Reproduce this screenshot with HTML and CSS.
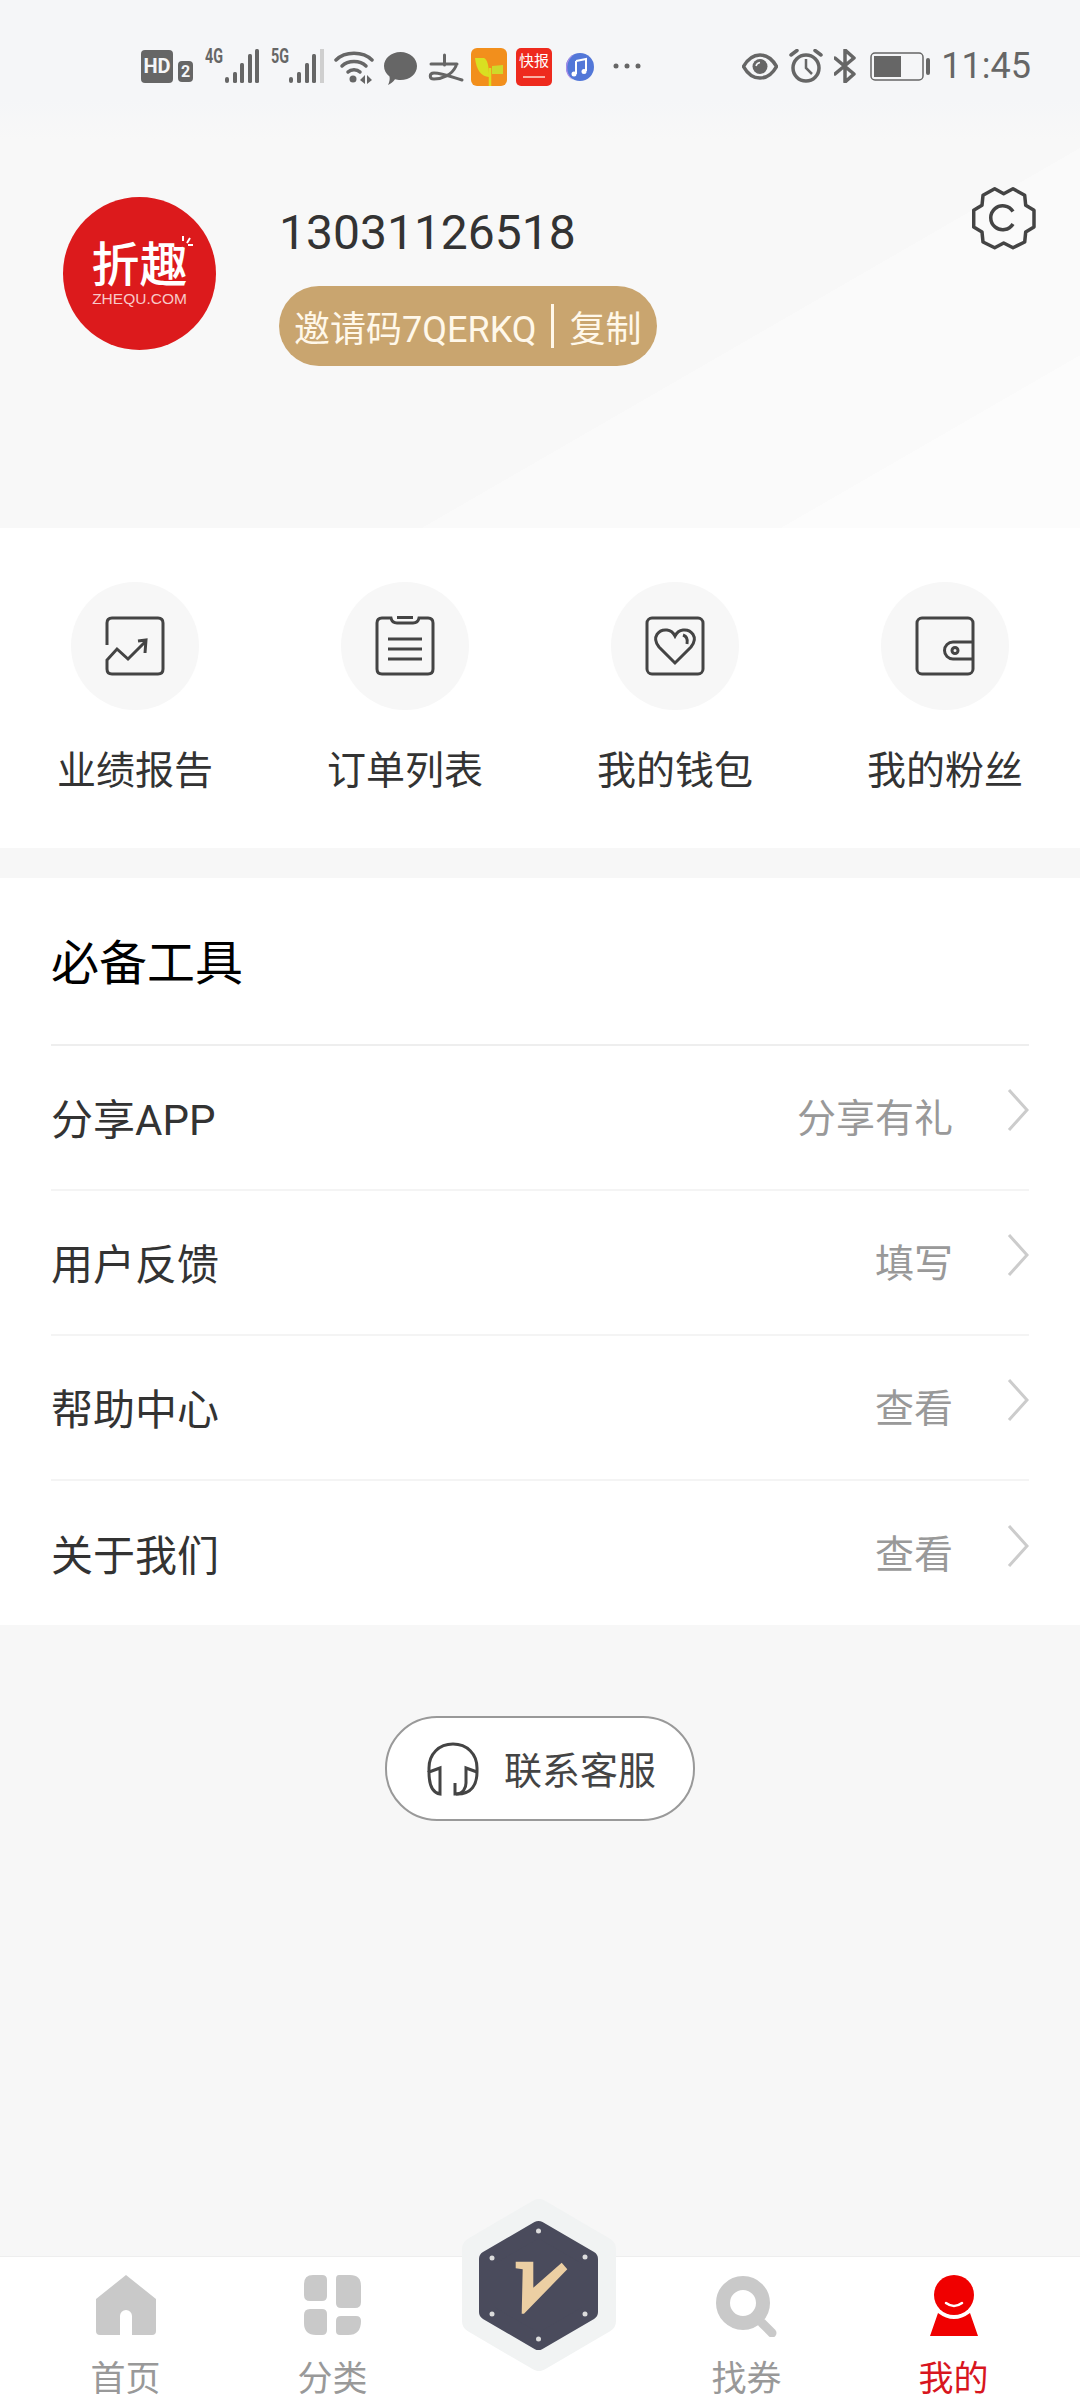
FILE: index.html
```html
<!DOCTYPE html>
<html lang="zh-CN">
<head>
    <meta charset="UTF-8">
    <meta name="viewport" content="width=device-width, initial-scale=1.0">
    <title>我的</title>
    <link rel="stylesheet" href="styles.css">
</head>
<body>
<div class="page">

    <header class="top">
        <div class="status">
            <span class="st hd">HD</span>
            <span class="st hd-two">2</span>
            <svg class="st sig-a" width="56" height="40" viewBox="0 -4 56 40">
                <text x="0" y="15" class="net" textLength="18" lengthAdjust="spacingAndGlyphs">4G</text>
                <rect x="20" y="29" width="4" height="6" rx="2" class="fill"/>
                <rect x="28" y="24" width="4" height="11" rx="1.5" class="fill"/>
                <rect x="35" y="15" width="4" height="20" rx="1.5" class="fill"/>
                <rect x="43" y="6" width="4" height="29" rx="1.5" class="fill"/>
                <rect x="50" y="1" width="4" height="34" rx="1.5" class="fill"/>
            </svg>
            <svg class="st sig-b" width="56" height="40" viewBox="0 -4 56 40">
                <text x="0" y="15" class="net" textLength="18" lengthAdjust="spacingAndGlyphs">5G</text>
                <rect x="18" y="29" width="4" height="6" rx="2" class="fill"/>
                <rect x="26" y="24" width="4" height="11" rx="1.5" class="fill"/>
                <rect x="34" y="15" width="4" height="20" rx="1.5" class="fill"/>
                <rect x="41" y="6" width="4" height="29" rx="1.5" class="fill"/>
                <rect x="49" y="1" width="4" height="34" fill="#cfcfcf"/>
            </svg>
            <svg class="st wifi" width="40" height="36" viewBox="0 0 40 36">
                <path d="M2 11C11 2 29 2 38 11" class="line"/>
                <path d="M8 17C14 11 26 11 32 17" class="line"/>
                <path d="M14 23C17 20 23 20 26 23" class="line"/>
                <circle cx="19" cy="30" r="3.5" class="fill"/>
                <path d="M31 26V35L26 31ZM33 26V35L38 31Z" class="fill"/>
            </svg>
            <svg class="st msg" width="35" height="35" viewBox="0 0 35 35">
                <path d="M17.5 1C27 1 34 7.5 34 15C34 23 27 29 17.5 29C15.5 29 13.5 28.7 12 28.2C10 31 7.5 33 5 34C6.5 31 7 28 6.5 25.5C3 22.8 1 19 1 15C1 7.5 8 1 17.5 1Z" class="fill"/>
            </svg>
            <svg class="st zhi" width="36" height="30" viewBox="0 0 36 30">
                <path d="M16.5 2V12M3 11H29M28 13C24 22 14 26 6 26C1 26 1 20 6 20C14 20 24 24 34 27" class="line-ali"/>
            </svg>
            <svg class="st sprout" width="36" height="38" viewBox="0 0 36 38">
                <rect width="36" height="38" rx="6" fill="#f28f1c"/>
                <path d="M4 10H13Q18 12 18 29Q6 28 4 10Z" fill="#d9e021"/>
                <path d="M21 18L32 17V26H21Z" fill="#cfd92a"/>
                <path d="M19 20V38" stroke="#d9e021" stroke-width="2.5"/>
            </svg>
            <div class="st kuai">
                <span>快报</span>
                <i></i>
            </div>
            <svg class="st music" width="30" height="30" viewBox="0 0 30 30">
                <circle cx="15" cy="15" r="14" fill="#5277d8"/>
                <path d="M1 15A14 14 0 0 1 10 2A16 16 0 0 0 8 28A14 14 0 0 1 1 15Z" fill="#a98be8"/>
                <path d="M11 9L21 7V19M11 9V22" stroke="#fff" stroke-width="2" fill="none"/>
                <circle cx="9" cy="22" r="2.5" fill="#fff"/>
                <circle cx="19" cy="19.5" r="2.5" fill="#fff"/>
            </svg>
            <svg class="st dots" width="28" height="8" viewBox="0 0 28 8">
                <circle cx="3" cy="4" r="2.5" class="fill"/>
                <circle cx="14" cy="4" r="2.5" class="fill"/>
                <circle cx="25" cy="4" r="2.5" class="fill"/>
            </svg>
            <div class="status-right">
                <svg class="st eye" width="36" height="27" viewBox="0 0 36 27">
                    <path d="M1.5 13.5C6 5.5 12 2 18 2C24 2 30 5.5 34.5 13.5C30 21.5 24 25 18 25C12 25 6 21.5 1.5 13.5Z" class="line"/>
                    <circle cx="18" cy="13.5" r="7.5" class="fill"/>
                    <path d="M14 13C14.5 11 16 9.8 18 9.5" stroke="#f5f6f8" stroke-width="1.5" fill="none"/>
                </svg>
                <svg class="st alarm" width="34" height="34" viewBox="0 0 34 34">
                    <circle cx="17" cy="19" r="13" class="line"/>
                    <path d="M17 10V19L23 25" class="line-thin"/>
                    <path d="M2 6L8 1.5M32 6L26 1.5" class="line"/>
                </svg>
                <svg class="st blue" width="22" height="34" viewBox="0 0 22 34">
                    <path d="M1 9L20 25L11 33V1L20 9L1 25" class="line"/>
                </svg>
                <svg class="st batt" width="61" height="29" viewBox="0 0 61 29">
                    <rect x="1" y="1" width="52" height="27" rx="4" fill="none" stroke="#666" stroke-width="1.5"/>
                    <rect x="4" y="4" width="27" height="21" class="fill"/>
                    <rect x="56" y="6" width="4" height="17" rx="2" class="fill"/>
                </svg>
                <span class="time">11:45</span>
            </div>
        </div>

        <div class="profile">
            <div class="avatar">
                <span class="logo-cn">折趣</span>
                <span class="logo-en">ZHEQU.COM</span>
                <svg class="logo-spark" width="16" height="16" viewBox="0 0 16 16">
                    <path d="M5 1V6M12 3L9 8M15 10H10" stroke="#fff" stroke-width="2"/>
                </svg>
            </div>
            <div class="who">
                <div class="phone">13031126518</div>
                <div class="invite">
                    <span>邀请码7QERKQ</span>
                    <i class="invite-bar"></i>
                    <span>复制</span>
                </div>
            </div>
            <svg class="gear" width="64" height="64" viewBox="0 0 64 64">
                <path class="gear-line" d="M22.7 2.7L31.7 7.7L41 2.7L52.7 9.300L53.7 19.300L62 24.300V41L53.7 46L52.7 56L41 61.700L31.7 57L22.7 61.700L11 56L10 46L1.7 41V24.300L10 19.300L11 9.300Z"/>
                <path class="gear-line" d="M41 25.5A12 12 0 1 0 41 38"/>
            </svg>
        </div>
    </header>

    <section class="quick">
        <div class="quick-item">
            <div class="quick-circle">
                <svg class="quick-icon" width="60" height="60" viewBox="0 0 60 60">
                    <path d="M2 29V7Q2 2 7 2H53Q58 2 58 7V53Q58 58 53 58H7Q2 58 2 53V44L12 33L23 43L41 25M33 25L41 24L40 37"/>
                </svg>
            </div>
            <span>业绩报告</span>
        </div>
        <div class="quick-item">
            <div class="quick-circle">
                <svg class="quick-icon" width="60" height="60" viewBox="0 0 60 60">
                    <path d="M16 2H7Q2 2 2 7V53Q2 58 7 58H53Q58 58 58 53V7Q58 2 53 2H44Q43 7 38 7H22Q17 7 16 2ZM22 1.5H38M13 23H47M13 33H47M13 43H47"/>
                </svg>
            </div>
            <span>订单列表</span>
        </div>
        <div class="quick-item">
            <div class="quick-circle">
                <svg class="quick-icon" width="60" height="60" viewBox="0 0 60 60">
                    <rect x="2" y="2" width="56" height="56" rx="5"/>
                    <path d="M30 47L14 31C6 21 14 13 22 14C26 14.5 28.5 17 30 20C31.5 17 34 14.5 38 14C46 13 54 21 46 31Z"/>
                    <path d="M38 19C41 20 43 23 42 28"/>
                </svg>
            </div>
            <span>我的钱包</span>
        </div>
        <div class="quick-item">
            <div class="quick-circle">
                <svg class="quick-icon" width="60" height="60" viewBox="0 0 60 60">
                    <rect x="2" y="2" width="56" height="56" rx="5"/>
                    <path d="M58 26H38A8.5 8.5 0 0 0 38 43H58"/>
                    <circle cx="40" cy="34.5" r="3"/>
                </svg>
            </div>
            <span>我的粉丝</span>
        </div>
    </section>

    <section class="tools">
        <h2 class="tools-title">必备工具</h2>
        <div class="tools-row">
            <span class="row-name">分享APP</span>
            <span class="row-hint">分享有礼</span>
            <svg class="chev" width="22" height="42" viewBox="0 0 22 42"><path d="M2 1L20 21L2 41"/></svg>
        </div>
        <div class="tools-row">
            <span class="row-name">用户反馈</span>
            <span class="row-hint">填写</span>
            <svg class="chev" width="22" height="42" viewBox="0 0 22 42"><path d="M2 1L20 21L2 41"/></svg>
        </div>
        <div class="tools-row">
            <span class="row-name">帮助中心</span>
            <span class="row-hint">查看</span>
            <svg class="chev" width="22" height="42" viewBox="0 0 22 42"><path d="M2 1L20 21L2 41"/></svg>
        </div>
        <div class="tools-row">
            <span class="row-name">关于我们</span>
            <span class="row-hint">查看</span>
            <svg class="chev" width="22" height="42" viewBox="0 0 22 42"><path d="M2 1L20 21L2 41"/></svg>
        </div>
    </section>

    <div class="service-wrap">
        <div class="service">
            <svg class="service-icon" width="54" height="54" viewBox="0 0 54 54">
                <path d="M3 30V26C3 12 13 2 27 2C41 2 51 12 51 26V30C51 42 46 52 31 52H29V41"/>
                <path d="M3 30L14 26V52C7 51 3 44 3 30Z"/>
                <path d="M51 30L40 26V41C40 46 37 52 30 52"/>
            </svg>
            <span>联系客服</span>
        </div>
    </div>

    <nav class="tabs">
        <div class="tab">
            <svg width="60" height="60" viewBox="0 0 60 60">
                <path d="M30 0L60 24V56Q60 60 56 60H36V41A6 6 0 0 0 24 41V60H4Q0 60 0 56V24Z" fill="#c9c9c9"/>
            </svg>
            <span>首页</span>
        </div>
        <div class="tab">
            <svg width="58" height="60" viewBox="0 0 58 60">
                <path d="M9 0H18Q23 0 23 5V21Q23 26 18 26H6Q0 26 0 20V9Q0 0 9 0Z" fill="#c9c9c9"/>
                <path d="M35 0H46Q57 0 57 11V27Q57 33 51 33H37Q32 33 32 28V4Q32 0 35 0Z" fill="#c9c9c9"/>
                <path d="M6 34H18Q23 34 23 39V55Q23 60 18 60H12Q0 60 0 48V40Q0 34 6 34Z" fill="#c9c9c9"/>
                <path d="M37 41H52Q57 41 57 46Q57 60 44 60H36Q32 60 32 56V46Q32 41 37 41Z" fill="#c9c9c9"/>
            </svg>
            <span>分类</span>
        </div>
        <div class="tab"></div>
        <div class="tab">
            <svg width="62" height="62" viewBox="0 0 62 62">
                <circle cx="27" cy="28" r="20" fill="none" stroke="#c9c9c9" stroke-width="14"/>
                <path d="M46 48L56 58" stroke="#c9c9c9" stroke-width="9" stroke-linecap="round"/>
            </svg>
            <span>找券</span>
        </div>
        <div class="tab tab-on">
            <svg width="48" height="62" viewBox="0 0 48 62">
                <circle cx="24" cy="20" r="20" fill="#f00000"/>
                <path d="M16 28Q24 34 32 28" stroke="#fff" stroke-width="2.5" fill="none" stroke-linecap="round"/>
                <path d="M8 38Q24 50 40 38L48 61H0Z" fill="#f00000"/>
            </svg>
            <span>我的</span>
        </div>
        <svg class="hex" width="156" height="172" viewBox="0 0 156 172">
            <path d="M77 12L142 50V122L77 160L12 122V50Z" fill="#f1f3f3" stroke="#f1f3f3" stroke-width="24" stroke-linejoin="round"/>
            <path d="M76.5 30L128 60V113L76.5 143L25 113V60Z" fill="#4a4b5c" stroke="#4a4b5c" stroke-width="16" stroke-linejoin="round"/>
            <circle cx="76.5" cy="32" r="2.5" fill="#dcdcdc"/>
            <circle cx="123" cy="58" r="2.5" fill="#dcdcdc"/>
            <circle cx="123" cy="115" r="2.5" fill="#dcdcdc"/>
            <circle cx="76.5" cy="140" r="2.5" fill="#dcdcdc"/>
            <circle cx="30" cy="115" r="2.5" fill="#dcdcdc"/>
            <circle cx="30" cy="59" r="2.5" fill="#dcdcdc"/>
            <path d="M53.7 62.7H71.3V88.7L99.7 63.7L105.3 70.3L62 114.7H59.7L60.7 70.3L53.7 69.3Z" fill="#eccfa3"/>
        </svg>
    </nav>

</div>
</body>
</html>
```

FILE: styles.css
```css
* {
    box-sizing: border-box;
}
body {
    margin: 0;
    font-family: Roboto, "Noto Sans CJK SC", sans-serif;
    color: #333;
}
.page {
    width: 1080px;
    height: 2400px;
    display: flex;
    flex-direction: column;
    background: #f7f7f7;
    overflow: hidden;
}

/* top area */
.top {
    height: 528px;
    background:
        linear-gradient(#f5f6f8 100px, rgba(245, 246, 248, 0) 140px),
        linear-gradient(150deg, #f8f8f8 67%, #fafafa 67%, #fafafa 85%, #fcfcfc 85%);
}
.status {
    height: 110px;
    padding: 48px 49px 0 141px;
    display: flex;
    align-items: flex-start;
}
.st {
    flex: none;
}
.fill {
    fill: #666;
}
.line {
    fill: none;
    stroke: #666;
    stroke-width: 3.5;
    stroke-linecap: round;
    stroke-linejoin: round;
}
.line-thin {
    fill: none;
    stroke: #666;
    stroke-width: 2.5;
}
.line-ali {
    fill: none;
    stroke: #666;
    stroke-width: 3;
    stroke-linecap: round;
}
.hd {
    width: 32px;
    height: 33px;
    margin-top: 2px;
    border-radius: 4px;
    background: #666;
    color: #f5f6f8;
    font-size: 20px;
    font-weight: 700;
    line-height: 33px;
    text-align: center;
}
.hd-two {
    width: 15px;
    height: 21px;
    margin: 13px 0 0 5px;
    border-radius: 4px;
    background: #666;
    color: #f5f6f8;
    font-size: 16px;
    font-weight: 700;
    line-height: 21px;
    text-align: center;
}
.net {
    font: 700 20px Roboto, sans-serif;
    fill: #666;
}
.sig-a {
    margin: -4px 0 0 12px;
}
.sig-b {
    margin: -4px 0 0 10px;
}
.wifi {
    margin-left: 7px;
    margin-top: 1px;
}
.msg {
    margin-left: 9px;
    margin-top: 3px;
}
.zhi {
    margin-left: 10px;
    margin-top: 5px;
}
.sprout {
    margin-left: 7px;
}
.kuai {
    width: 36px;
    height: 38px;
    margin-left: 9px;
    border-radius: 5px;
    background: #ee2a1e;
    color: #fff;
    display: flex;
    flex-direction: column;
    align-items: center;
}
.kuai span {
    font-size: 15px;
    line-height: 26px;
    white-space: nowrap;
}
.kuai i {
    width: 22px;
    height: 2px;
    margin-top: 2px;
    background: #f9b0a5;
}
.music {
    margin-left: 13px;
    margin-top: 4px;
}
.dots {
    margin-left: 18px;
    margin-top: 14px;
}
.status-right {
    margin-left: auto;
    margin-top: 1px;
    display: flex;
    align-items: center;
    height: 34px;
}
.eye {
    margin-right: 11px;
}
.alarm {
    margin-right: 11px;
}
.blue {
    margin-right: 14px;
}
.batt {
    margin-right: 10px;
}
.time {
    font-size: 36px;
    line-height: 34px;
    color: #666;
}

.profile {
    padding: 87px 44px 0 63px;
    display: flex;
    align-items: flex-start;
}
.avatar {
    position: relative;
    width: 153px;
    height: 153px;
    border-radius: 50%;
    background: #dc1a1c;
    color: #fff;
    display: flex;
    flex-direction: column;
    align-items: center;
    padding-top: 46px;
}
.logo-cn {
    font-size: 48px;
    line-height: 46px;
    font-weight: 500;
    white-space: nowrap;
}
.logo-en {
    font: 15.5px "Liberation Sans", sans-serif;
    line-height: 20px;
    color: #f8c9c9;
}
.logo-spark {
    position: absolute;
    right: 22px;
    top: 38px;
}
.who {
    margin-left: 63px;
    flex: 1;
}
.phone {
    margin-top: 6px;
    font-size: 48px;
    line-height: 60px;
}
.invite {
    width: 378px;
    height: 80px;
    margin-top: 23px;
    padding: 0 15px;
    border-radius: 40px;
    background: #c9a56f;
    color: #fff8ea;
    font-size: 36px;
    display: flex;
    align-items: center;
    white-space: nowrap;
}
.invite-bar {
    flex: none;
    width: 3px;
    height: 44px;
    margin: 0 15px;
    background: #fff8ea;
}
.gear {
    margin-top: -11px;
}
.gear-line {
    fill: none;
    stroke: #444;
    stroke-width: 3.5;
    stroke-linejoin: round;
}

/* quick links */
.quick {
    height: 320px;
    padding-top: 54px;
    background: #fff;
    display: grid;
    grid-template-columns: repeat(4, 270px);
}
.quick-item {
    display: flex;
    flex-direction: column;
    align-items: center;
    font-size: 39px;
    color: #333;
}
.quick-item span {
    margin-top: 33px;
    line-height: 56px;
}
.quick-circle {
    width: 128px;
    height: 128px;
    border-radius: 50%;
    background: #f7f7f7;
    display: flex;
    align-items: center;
    justify-content: center;
}
.quick-icon * {
    fill: none;
    stroke: #444;
    stroke-width: 3;
}

/* tool list */
.tools {
    margin-top: 30px;
    height: 747px;
    padding: 0 51px;
    background: #fff;
}
.tools-title {
    height: 168px;
    margin: 0;
    font-size: 48px;
    font-weight: 400;
    line-height: 172px;
    color: #000;
    border-bottom: 2px solid #eee;
}
.tools-row {
    height: 145px;
    display: flex;
    align-items: center;
    border-bottom: 2px solid #f4f4f4;
}
.tools-row:last-child {
    border-bottom: none;
}
.row-name {
    margin-bottom: 2px;
    font-size: 42px;
    color: #333;
}
.row-hint {
    margin-left: auto;
    margin-bottom: 6px;
    font-size: 39px;
    color: #999;
}
.chev {
    margin: -16px 0 0 54px;
}
.chev path {
    fill: none;
    stroke: #ccc;
    stroke-width: 3;
}

/* contact button */
.service-wrap {
    padding-top: 91px;
    display: flex;
    justify-content: center;
}
.service {
    width: 310px;
    height: 105px;
    border: 2px solid #999;
    border-radius: 52px;
    background: #fff;
    padding-left: 39px;
    display: flex;
    align-items: center;
    font-size: 38px;
    color: #444;
}
.service span {
    margin-left: 24px;
    margin-top: -2px;
    white-space: nowrap;
}
.service-icon * {
    fill: none;
    stroke: #444;
    stroke-width: 3;
}

/* bottom tabs */
.tabs {
    position: relative;
    margin-top: auto;
    height: 144px;
    padding: 18px 22px 0;
    border-top: 1px solid #eee;
    background: #fff;
    display: grid;
    grid-template-columns: repeat(5, 207px);
}
.tab {
    display: flex;
    flex-direction: column;
    align-items: center;
    font-size: 35px;
    color: #999;
}
.tab svg {
    flex: none;
}
.tab span {
    line-height: 42px;
    margin-top: 24px;
    white-space: nowrap;
}
.tab-on {
    color: #d8161e;
}
.tab-on span,
.tab:nth-child(4) span {
    margin-top: 22px;
}
.hex {
    position: absolute;
    left: 462px;
    top: -58px;
}
```
